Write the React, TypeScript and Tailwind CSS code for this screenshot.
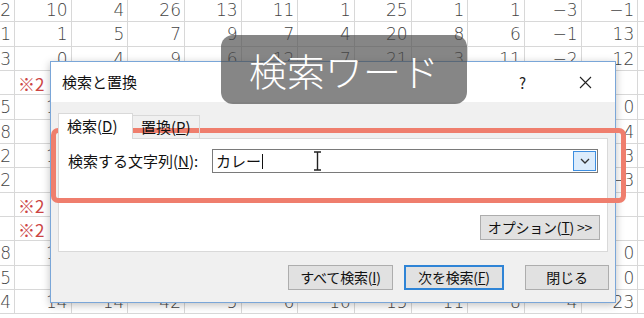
import React from "react";

const rows: string[][] = [
  ["2", "10", "4", "26", "13", "11", "1", "25", "1", "1", "−3", "−1", ""],
  ["1", "1", "5", "7", "9", "7", "4", "20", "8", "6", "−1", "13", ""],
  ["3", "0", "4", "9", "6", "12", "7", "21", "3", "11", "−2", "12", ""],
  ["", "※2", "", "", "", "", "", "", "", "", "", "", ""],
  ["5", "12", "", "", "", "", "", "", "", "", "", "0", ""],
  ["8", "", "", "", "", "", "", "", "", "", "", "4", ""],
  ["2", "10", "", "", "", "", "", "", "", "", "", "3", ""],
  ["2", "", "", "", "", "", "", "", "", "", "", "−3", ""],
  ["", "※2", "", "", "", "", "", "", "", "", "", "", ""],
  ["", "※2", "", "", "", "", "", "", "", "", "", "", ""],
  ["8", "11", "", "", "", "", "", "", "", "", "", "0", ""],
  ["5", "", "", "", "", "", "", "", "", "", "", "0", ""],
  ["4", "14", "14", "42", "5", "6", "10", "15", "11", "8", "4", "23", ""],
];

const jp = { fontFamily: '"Noto Sans CJK JP", "Noto Sans", sans-serif' };

function Btn({ children, w, focus }: { children: React.ReactNode; w: string; focus?: boolean }) {
  return (
    <div
      className={`${w} h-[25px] flex items-center justify-center text-[14px] tracking-[-0.2px] text-[#111] bg-[#e1e1e1] ${
        focus ? "border-2 border-[#2f84d6]" : "border border-[#adadad]"
      }`}
    >
      {children}
    </div>
  );
}

export default function App() {
  return (
    <div className="relative w-[644px] h-[318px] overflow-hidden bg-white">
      {/* spreadsheet */}
      <div className="ml-[-41.67px] mt-[-2px] grid grid-cols-[repeat(13,56.67px)]">
        {rows.map((r, i) =>
          r.map((v, j) => {
            const note = v.startsWith("※");
            return (
              <div
                key={`${i}-${j}`}
                className={`h-[24.33px] border-r border-b border-[#d8d8d8] flex items-center pt-[2px] text-[17px] leading-none ${
                  note ? "justify-start pl-[3px] text-[#cc4444]" : "justify-end pr-[3px] text-[#444] font-light"
                }`}
                style={
                  note
                    ? jp
                    : { fontFamily: '"DejaVu Sans", "Liberation Sans", sans-serif' }
                }
              >
                {v}
              </div>
            );
          })
        )}
      </div>

      {/* dialog */}
      <div
        className="absolute left-[50px] top-[61px] w-[566px] h-[242px] border border-[#7aa6d8] bg-[#f0f0f0] flex flex-col shadow-[0_2px_8px_rgba(0,0,0,0.25)]"
        style={jp}
      >
        <div className="h-[40px] bg-white flex items-center relative shrink-0">
          <span className="ml-[11px] text-[15px] text-[#111]">検索と置換</span>
          <span className="absolute left-[468px] top-[10px] text-[15px] text-[#222]">?</span>
          <svg className="absolute left-[528px] top-[14px]" width="13" height="13" viewBox="0 0 13 13">
            <path d="M1 1 L12 12 M12 1 L1 12" stroke="#222" strokeWidth="1.1" />
          </svg>
        </div>
        <div className="px-[7px] pt-[11px] flex flex-col">
          <div className="flex h-[25px] relative z-10">
            <div className="w-[75px] h-[26px] bg-white border border-b-0 border-[#d9d9d9] flex items-center pl-[8px] text-[15px] text-[#111]">
              検索(<u>D</u>)
            </div>
            <div className="w-[67px] h-[23px] mt-[2px] border-t border-r border-[#d9d9d9] flex items-center pl-[8px] text-[15px] text-[#111]">
              置換(<u>P</u>)
            </div>
          </div>
          <div className="h-[114px] bg-white border border-[#d9d9d9] flex flex-col">
            <div className="flex items-center mt-[10px] h-[24px]">
              <span className="ml-[9px] w-[144px] text-[15px] text-[#111]">
                検索する文字列(<u>N</u>):
              </span>
              <div className="w-[386px] h-[24px] border border-[#7a7a7a] bg-white flex items-center relative">
                <span className="ml-[3px] text-[15px] text-[#111]">カレー</span>
                <span className="w-[1px] h-[15px] bg-[#111] ml-[1px]" />
                <svg className="absolute left-[100px] top-[1px]" width="9" height="20" viewBox="0 0 9 20">
                  <path d="M1 1 H8 M4.5 1 V19 M1 19 H8" stroke="#222" strokeWidth="1.4" fill="none" />
                </svg>
                <div className="absolute right-[1px] top-[1px] w-[23px] h-[20px] bg-[#dcecfc] border border-[#3d8ee0] flex items-center justify-center">
                  <svg width="10" height="6" viewBox="0 0 10 6">
                    <path d="M1 1 L5 5 L9 1" stroke="#333" strokeWidth="1.3" fill="none" />
                  </svg>
                </div>
              </div>
            </div>
            <div className="mt-auto mb-[11px] flex justify-end pr-[7px]">
              <Btn w="w-[120px]">
                オプション(<u>T</u>) &gt;&gt;
              </Btn>
            </div>
          </div>
          <div className="flex justify-end mt-[13px] mr-[-1px]">
            <Btn w="w-[105px]">
              すべて検索(<u>I</u>)
            </Btn>
            <div className="ml-[11px]">
              <Btn w="w-[100px]" focus>
                次を検索(<u>F</u>)
              </Btn>
            </div>
            <div className="ml-[21px]">
              <Btn w="w-[84px]">閉じる</Btn>
            </div>
          </div>
        </div>
      </div>

      {/* highlight */}
      <div className="absolute left-[51px] top-[128px] w-[575px] h-[75px] border-[5px] border-[#ef7e6d] rounded-[7px]" />

      {/* label */}
      <div
        className="absolute left-[221px] top-[35px] w-[246px] h-[69px] rounded-[12px] bg-[rgba(72,72,72,0.66)] flex items-center justify-center text-white text-[38px] font-light leading-none"
        style={jp}
      >
        検索ワード
      </div>
    </div>
  );
}
